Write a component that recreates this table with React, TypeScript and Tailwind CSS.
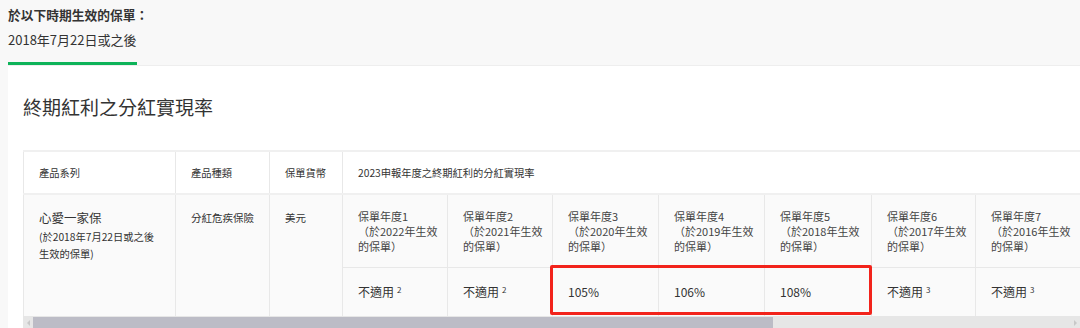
import React from "react";

const FONT = '"Noto Sans CJK TC", "Noto Sans", sans-serif';

const years = [
  { n: 1, y: 2022, v: "不適用", sup: "2" },
  { n: 2, y: 2021, v: "不適用", sup: "2" },
  { n: 3, y: 2020, v: "105%" },
  { n: 4, y: 2019, v: "106%" },
  { n: 5, y: 2018, v: "108%" },
  { n: 6, y: 2017, v: "不適用", sup: "3" },
  { n: 7, y: 2016, v: "不適用", sup: "3" },
];

export default function App() {
  return (
    <div
      className="relative w-[1080px] h-[328px] overflow-hidden bg-[#f8f8f8] text-[#333]"
      style={{ fontFamily: FONT }}
    >
      {/* Tab header */}
      <div className="pl-2 pt-[5px]">
        <div className="text-[12.75px] font-bold leading-[20px]">於以下時期生效的保單：</div>
        <div className="mt-[5px] text-[13px] leading-[20px] text-[#333]">2018年7月22日或之後</div>
        <div className="mt-[12px] w-[129px] h-[3px] bg-[#0db359]" />
      </div>

      {/* Panel */}
      <div className="ml-2 bg-white border-t border-[#eeeeee] pl-[15px] pt-[27px] h-[263px]">
        <h2 className="text-[19px] leading-[28px] font-normal text-[#333]">終期紅利之分紅實現率</h2>

        <div className="mt-[29px] w-[1057px] overflow-hidden">
          <table className="table-fixed border-collapse w-[1057px] text-[11px] leading-[15px]">
            <colgroup>
              <col className="w-[152px]" />
              <col className="w-[94px]" />
              <col className="w-[73px]" />
              <col className="w-[105px]" />
              <col className="w-[105px]" />
              <col className="w-[106px]" />
              <col className="w-[106px]" />
              <col className="w-[107px]" />
              <col className="w-[104px]" />
              <col className="w-[105px]" />
            </colgroup>
            <thead>
              <tr className="h-[43px] bg-white border-t-2 border-b-2 border-[#f0f0f0] text-[10.25px]">
                <th className="border-l border-r border-[#e8e8e8] pl-[15px] text-left font-normal">產品系列</th>
                <th className="border-r border-[#e8e8e8] pl-[15px] text-left font-normal">產品種類</th>
                <th className="border-r border-[#e8e8e8] pl-[15px] text-left font-normal">保單貨幣</th>
                <th colSpan={years.length} className="pl-[15px] text-left font-normal">
                  2023申報年度之終期紅利的分紅實現率
                </th>
              </tr>
            </thead>
            <tbody className="bg-[#fafafa]">
              <tr className="h-[73px]">
                <td rowSpan={2} className="border-l border-r border-[#e8e8e8] pl-[15px] pt-[13px] align-top">
                  <div className="text-[12.5px] leading-[20px]">心愛一家保</div>
                  <div className="text-[10.25px] leading-[17px]">
                    (於2018年7月22日或之後
                    <br />
                    生效的保單)
                  </div>
                </td>
                <td rowSpan={2} className="border-r border-[#e8e8e8] pl-[15px] pt-[15px] align-top text-[10.5px]">
                  分紅危疾保險
                </td>
                <td rowSpan={2} className="border-r border-[#e8e8e8] pl-[15px] pt-[15px] align-top text-[10.5px]">
                  美元
                </td>
                {years.map((y) => (
                  <td
                    key={y.n}
                    className="border-r border-b border-[#e8e8e8] pl-[15px] pt-[14px] align-top whitespace-nowrap text-[#444]"
                  >
                    保單年度{y.n}
                    <br />
                    （於{y.y}年生效
                    <br />
                    的保單）
                  </td>
                ))}
              </tr>
              <tr className="h-[49px]">
                {years.map((y) => (
                  <td key={y.n} className="border-r border-[#e8e8e8] pl-[15px] align-middle text-[12px]">
                    {y.v}
                    {y.sup && <sup className="ml-[3px] text-[8px]">{y.sup}</sup>}
                  </td>
                ))}
              </tr>
            </tbody>
          </table>
        </div>

        {/* Horizontal scrollbar */}
        <div className="flex items-center w-[1057px] h-[13px] bg-[#e6e6e6]">
          <div className="w-[10px] flex justify-center">
            <div className="w-0 h-0 border-y-[3px] border-y-transparent border-r-[3px] border-r-[#c8c8c8]" />
          </div>
          <div className="w-[740px] h-[11px] bg-[#bcbcc6]" />
          <div className="flex-1" />
          <div className="w-[10px] flex justify-center">
            <div className="w-0 h-0 border-y-[3px] border-y-transparent border-l-[3px] border-l-[#c8c8c8]" />
          </div>
        </div>
      </div>

      {/* Red highlight annotation */}
      <div className="absolute left-[550px] top-[265px] w-[322px] h-[50px] border-[3px] border-[#f2231b] rounded-[2px]" />
    </div>
  );
}
